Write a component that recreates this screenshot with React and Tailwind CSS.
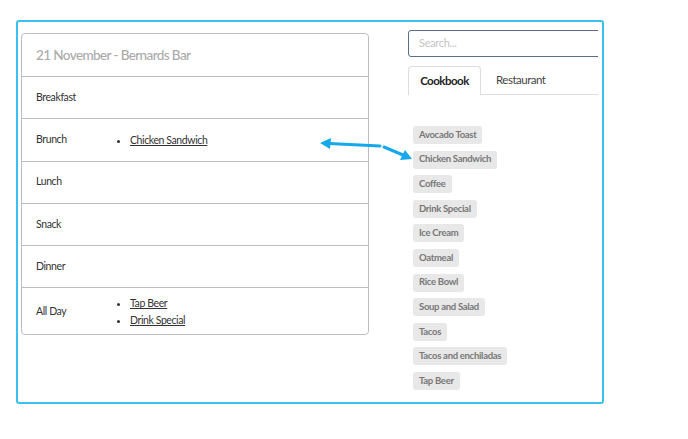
import React from "react";

const meals = [
  { name: "Breakfast", items: [] },
  { name: "Brunch", items: ["Chicken Sandwich"] },
  { name: "Lunch", items: [] },
  { name: "Snack", items: [] },
  { name: "Dinner", items: [] },
  { name: "All Day", items: ["Tap Beer", "Drink Special"] },
];

const recipes = [
  "Avocado Toast",
  "Chicken Sandwich",
  "Coffee",
  "Drink Special",
  "Ice Cream",
  "Oatmeal",
  "Rice Bowl",
  "Soup and Salad",
  "Tacos",
  "Tacos and enchiladas",
  "Tap Beer",
];

function MealRow({ meal, last }) {
  return (
    <div
      className={
        "flex items-center pl-[14px] " +
        (meal.items.length > 1 ? "h-[46px] " : "h-[42.3px] ") +
        (last ? "" : "border-b border-[#bdbdbd]")
      }
    >
      <div className="w-[94px] shrink-0 text-[10.5px] tracking-[-0.4px] text-[#333]">{meal.name}</div>
      <ul className="list-disc list-outside pl-0 text-[10.5px] leading-[16px] tracking-[-0.4px] text-[#333]">
        {meal.items.map((item) => (
          <li key={item} className="pt-[1px]">
            <span className="underline underline-offset-1">{item}</span>
          </li>
        ))}
      </ul>
    </div>
  );
}

export default function App() {
  return (
    <div
      className="relative h-[439px] w-[688px] bg-white pl-[16px] pt-[20px]"
      style={{ fontFamily: "Lato, 'Open Sans', sans-serif" }}
    >
      <div className="flex h-[384px] w-[588px] overflow-hidden rounded-[3px] border-2 border-[#3cc0f2]">
        {/* Day plan card */}
        <div className="ml-[3px] mt-[11px] h-[302px] w-[348px] shrink-0 overflow-hidden rounded-[4px] border border-[#bdbdbd]">
          <div className="flex h-[43px] items-center border-b border-[#bdbdbd] pl-[14px] text-[13.5px] font-medium tracking-[-0.6px] text-[#aaaaaa]">
            21 November - Bernards Bar
          </div>
          {meals.map((m, i) => (
            <MealRow key={m.name} meal={m} last={i === meals.length - 1} />
          ))}
        </div>

        {/* Recipe picker */}
        <div className="ml-[39px] mt-[8px] w-[190px] shrink-0 overflow-hidden">
          <div className="flex h-[27px] w-[220px] items-center rounded-[3px] border border-[#5b6d8f] pl-[10px] text-[11px] tracking-[-0.3px] text-[#c4c4c4]">
            Search...
          </div>
          <div className="mt-[9px] flex h-[29px] items-stretch">
            <div className="flex w-[73px] items-center justify-center rounded-t-[4px] border border-b-0 border-[#dddddd] text-[11.5px] font-bold tracking-[-0.5px] text-[#222]">
              Cookbook
            </div>
            <div className="flex flex-1 items-center border-b border-[#dddddd] pl-[15px] text-[11.5px] tracking-[-0.5px] text-[#444]">
              Restaurant
            </div>
          </div>
          <div className="mt-[31px] flex flex-col items-start gap-[6.6px] pl-[5px]">
            {recipes.map((r) => (
              <span
                key={r}
                className="flex h-[18px] items-center rounded-[3px] bg-[#e8e8e8] px-[6px] text-[9.5px] font-bold tracking-[-0.3px] text-[#777]"
              >
                {r}
              </span>
            ))}
          </div>
        </div>
      </div>

      {/* annotation arrows */}
      <svg
        className="pointer-events-none absolute left-0 top-0"
        width="688"
        height="439"
        viewBox="0 0 688 439"
      >
        <line x1="380" y1="146" x2="329" y2="143.5" stroke="#16a8ec" strokeWidth="3" strokeLinecap="round" />
        <polygon points="320,143 331,138 330,149" fill="#16a8ec" />
        <line x1="384" y1="147" x2="403" y2="155" stroke="#16a8ec" strokeWidth="3" strokeLinecap="round" />
        <polygon points="412,159 400,160 405,150" fill="#16a8ec" />
      </svg>
    </div>
  );
}
